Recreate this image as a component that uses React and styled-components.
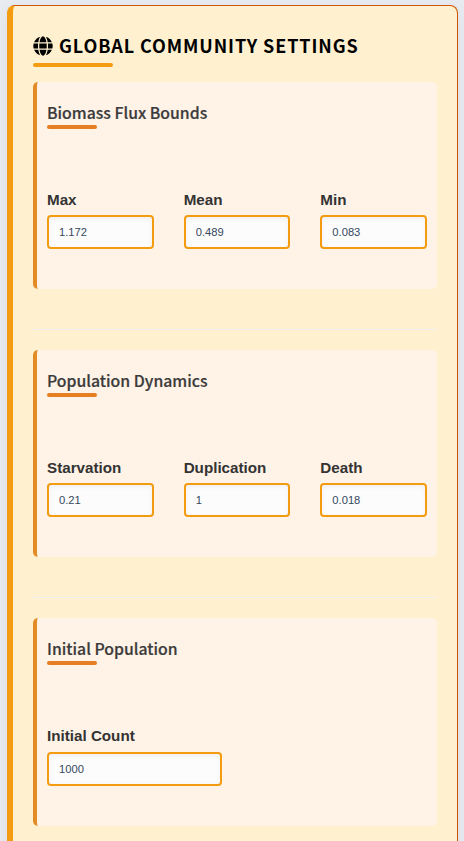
import React from "react";
import styled, { createGlobalStyle } from "styled-components";
import { FaGlobe } from "react-icons/fa";

const GlobalStyle = createGlobalStyle`
  * { box-sizing: border-box; }
  html, body { margin: 0; height: 841px; overflow: hidden; }
  body { background: #e8ecf1; font-family: "Liberation Sans", Arial, sans-serif; }
`;

const Page = styled.div`
  height: 841px;
  padding: 5px 6px 0 7px;
  overflow: hidden;
`;

const Card = styled.main`
  height: 900px;
  padding: 20px;
  background: #fff1d0;
  border: 1px solid #d35400;
  border-left: 6px solid #f39c12;
  border-radius: 8px;
  box-shadow: 0 4px 15px rgba(0, 0, 0, 0.06);
`;

const Title = styled.h1`
  display: flex;
  align-items: center;
  gap: 6px;
  height: 41px;
  margin: 0 0 15px;
  padding-bottom: 2px;
  position: relative;
  color: #000;
  font: 700 18px/29px "Noto Sans CJK JP", "Noto Sans", sans-serif;
  letter-spacing: 0.9px;
  text-transform: uppercase;
  white-space: nowrap;

  svg { display: block; flex: none; }

  &::after {
    content: "";
    position: absolute;
    left: 0;
    bottom: 0;
    width: 80px;
    height: 4px;
    border-radius: 2px;
    background: #f39c12;
  }
`;

const Section = styled.section`
  height: ${({ $height }) => $height || 207}px;
  padding: 18px 10px 0;
  background: #fff2e6;
  border-left: 4px solid #e38b25;
  border-radius: 5px;
`;

const SectionTitle = styled.h2`
  position: relative;
  height: 29px;
  margin: 0 0 62px;
  color: #3b3b3b;
  font: 500 15.8px/26px "Noto Sans CJK JP", "Noto Sans", sans-serif;
  -webkit-text-stroke: 0.2px #3b3b3b;

  &::after {
    content: "";
    position: absolute;
    left: 0;
    bottom: 0;
    width: 50px;
    height: 4px;
    border-radius: 2px;
    background: #e67e22;
  }
`;

const Fields = styled.div`
  display: grid;
  grid-template-columns: ${({ $single }) => ($single ? "175px" : "repeat(3, 1fr)")};
  column-gap: 30px;
`;

const Field = styled.label`
  display: block;
  color: #333;
  font-size: 15.2px;
  font-weight: 700;
  line-height: 18px;
`;

const Input = styled.input`
  display: block;
  width: 100%;
  height: 34px;
  margin-top: ${({ $gap }) => $gap || 6}px;
  padding: 0 10px;
  border: 2px solid #f39c12;
  border-radius: 4px;
  outline: none;
  background: #fcfcfc;
  box-shadow: inset 0 2px 5px rgba(0, 0, 0, 0.05);
  color: #34495e;
  font: 11.2px "Liberation Sans", Arial, sans-serif;
`;

const Divider = styled.hr`
  height: 1px;
  margin: 40px 0 20px;
  border: 0;
  background: #eee;
`;

const groups = [
  { title: "Biomass Flux Bounds", fields: [["Max", "1.172"], ["Mean", "0.489"], ["Min", "0.083"]] },
  { title: "Population Dynamics", fields: [["Starvation", "0.21"], ["Duplication", "1"], ["Death", "0.018"]] },
  { title: "Initial Population", height: 208, gap: 7, single: true, fields: [["Initial Count", "1000"]] },
];

export default function App() {
  return (
    <Page>
      <GlobalStyle />
      <Card>
        <Title><FaGlobe size={20} />Global Community Settings</Title>
        {groups.map((group, i) => (
          <React.Fragment key={group.title}>
            {i > 0 && <Divider />}
            <Section $height={group.height}>
              <SectionTitle>{group.title}</SectionTitle>
              <Fields $single={group.single}>
                {group.fields.map(([label, value]) => (
                  <Field key={label}>
                    {label}
                    <Input $gap={group.gap} defaultValue={value} />
                  </Field>
                ))}
              </Fields>
            </Section>
          </React.Fragment>
        ))}
      </Card>
    </Page>
  );
}
